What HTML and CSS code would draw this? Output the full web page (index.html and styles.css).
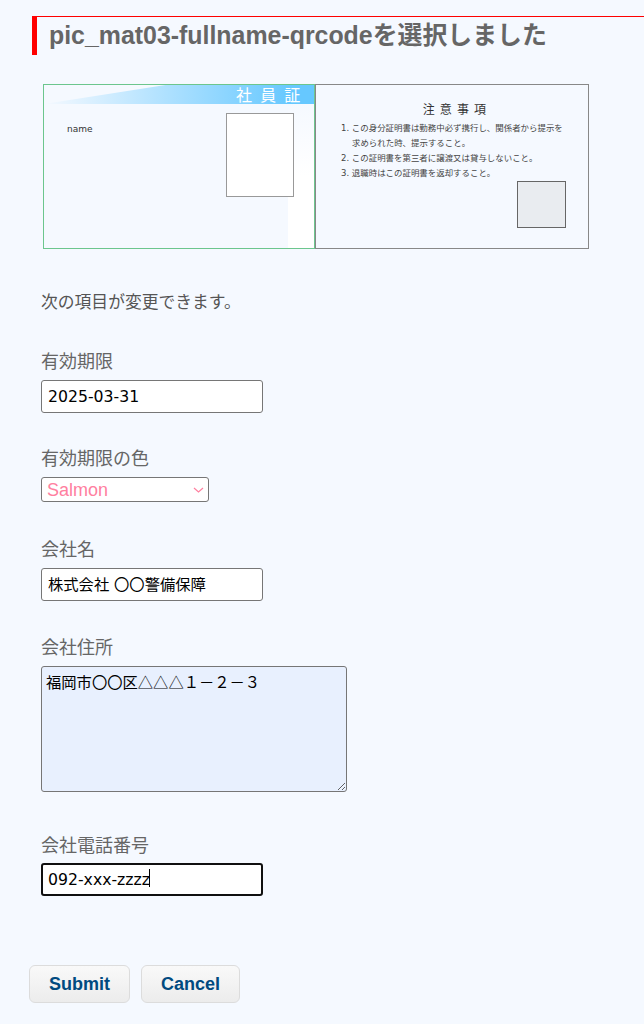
FILE: index.html
```html
<!DOCTYPE html>
<html lang="ja">
<head>
    <meta charset="UTF-8">
    <meta name="viewport" content="width=device-width, initial-scale=1.0">
    <title>pic_mat03-fullname-qrcode</title>
    <link rel="stylesheet" href="styles.css">
</head>
<body>
    <h1 class="page-title">pic_mat03-fullname-qrcodeを選択しました</h1>

    <div class="card-preview">
        <div class="card-front">
            <div class="card-band"></div>
            <div class="card-strip"></div>
            <span class="card-title">社 員 証</span>
            <span class="card-name">name</span>
            <div class="card-photo"></div>
        </div>
        <div class="card-back">
            <h2 class="notes-title">注 意 事 項</h2>
            <ol class="notes">
                <li>この身分証明書は勤務中必ず携行し、関係者から提示を<br>求められた時、提示すること。</li>
                <li>この証明書を第三者に譲渡又は貸与しないこと。</li>
                <li>退職時はこの証明書を返却すること。</li>
            </ol>
            <div class="card-stamp"></div>
        </div>
    </div>

    <p class="lead">次の項目が変更できます。</p>

    <form class="edit-form">
        <div class="field field-date">
            <label>有効期限</label>
            <input type="text" class="text-input" value="2025-03-31">
        </div>
        <div class="field field-color">
            <label>有効期限の色</label>
            <div class="select-box">
                <span>Salmon</span>
                <svg class="select-arrow" width="11" height="6" viewBox="0 0 11 6"><path d="M1 1l4.5 4L10 1" fill="none" stroke="#ff80a0" stroke-width="1.2"/></svg>
            </div>
        </div>
        <div class="field field-company">
            <label>会社名</label>
            <input type="text" class="text-input" value="株式会社 〇〇警備保障">
        </div>
        <div class="field field-address">
            <label>会社住所</label>
            <textarea class="text-area">福岡市〇〇区△△△１－２－３</textarea>
        </div>
        <div class="field field-phone">
            <label>会社電話番号</label>
            <div class="input-wrap">
                <input type="text" class="text-input focused" value="092-xxx-zzzz">
                <span class="caret"></span>
            </div>
        </div>
        <div class="buttons">
            <button type="button" class="btn btn-submit">Submit</button>
            <button type="button" class="btn btn-cancel">Cancel</button>
        </div>
    </form>
</body>
</html>
```

FILE: styles.css
```css
* {
    margin: 0;
    padding: 0;
    box-sizing: border-box;
}

body {
    font-family: 'DejaVu Sans', 'Noto Sans CJK JP', sans-serif;
    background-color: #f5f9ff;
    color: #555;
    padding: 16px 0 0 32px;
    min-height: 1024px;
}

.page-title {
    height: 39px;
    border-top: 1px solid #ff0000;
    border-left: 5px solid #ff0000;
    padding: 2px 0 0 12px;
    font-family: 'Liberation Sans', 'Noto Sans CJK JP', sans-serif;
    font-size: 24.9px;
    line-height: 32px;
    font-weight: bold;
    color: #666;
    white-space: nowrap;
}

.card-preview {
    display: flex;
    margin: 29px 0 0 11px;
    width: 546px;
    height: 165px;
}

.card-front {
    position: relative;
    width: 272px;
    height: 165px;
    border: 1px solid #6cc68e;
}

.card-band {
    position: absolute;
    top: 0;
    left: 0;
    width: 270px;
    height: 19px;
    background: linear-gradient(90deg, #f5f9ff 0%, #66c8ff 92%);
    clip-path: polygon(0 100%, 45% 0, 100% 0, 100% 100%);
}

.card-strip {
    position: absolute;
    top: 19px;
    right: 0;
    width: 26px;
    bottom: 0;
    background: linear-gradient(180deg, #f5f9ff 0%, #fff 50%);
}

.card-title {
    position: absolute;
    top: 0;
    left: 192px;
    font-family: 'Noto Sans CJK JP', sans-serif;
    font-size: 16px;
    line-height: 18px;
    letter-spacing: 2.3px;
    color: #fff;
    white-space: nowrap;
}

.card-name {
    position: absolute;
    top: 37px;
    left: 23px;
    font-size: 9px;
    line-height: 14px;
    color: #333;
}

.card-photo {
    position: absolute;
    top: 28px;
    left: 182px;
    width: 68px;
    height: 84px;
    background-color: #fff;
    border: 1px solid #999;
}

.card-back {
    position: relative;
    width: 274px;
    height: 165px;
    border: 1px solid #888;
}

.notes-title {
    margin-top: 15px;
    padding-left: 6px;
    text-align: center;
    font-family: 'Noto Sans CJK JP', sans-serif;
    font-size: 12px;
    line-height: 18px;
    letter-spacing: 1.2px;
    font-weight: normal;
    color: #333;
}

.notes {
    margin: 2px 0 0 25px;
    list-style: none;
    counter-reset: note;
    font-family: 'Noto Sans CJK JP', sans-serif;
    font-size: 8.45px;
    line-height: 15px;
    color: #444;
    white-space: nowrap;
}

.notes li {
    counter-increment: note;
    padding-left: 11px;
    text-indent: -11px;
}

.notes li::before {
    content: counter(note) ". ";
    font-family: 'DejaVu Sans', sans-serif;
    font-size: 8.5px;
    line-height: 0;
}

.card-stamp {
    position: absolute;
    top: 96px;
    left: 201px;
    width: 49px;
    height: 47px;
    background-color: #e9ecf0;
    border: 1px solid #666;
}

.lead {
    margin: 40px 0 0 9px;
    font-size: 16.8px;
    line-height: 24px;
    font-family: 'Noto Sans CJK JP', sans-serif;
    color: #555;
}

.edit-form {
    margin-left: 9px;
}

.field label {
    display: block;
    font-family: 'Noto Sans CJK JP', sans-serif;
    font-size: 18px;
    line-height: 26px;
    color: #666;
}

.field-date {
    margin-top: 34px;
}

.field-color {
    margin-top: 31px;
}

.field-color .select-box {
    margin-top: 7px;
}

.field-company {
    margin-top: 33px;
}

.field-address {
    margin-top: 32px;
}

.field-phone {
    margin-top: 39px;
}

.field-date .text-input {
    margin-top: 7px;
}

.field-phone .text-input {
    margin-top: 6px;
}

.field-company .text-input {
    margin-top: 7px;
    padding-bottom: 4px;
    font-size: 15.3px;
}

.text-input {
    display: block;
    width: 222px;
    height: 33px;
    padding: 0 6px;
    font-family: 'DejaVu Sans', 'Noto Sans CJK JP', sans-serif;
    font-size: 15.7px;
    color: #000;
    background-color: #fff;
    border: 1px solid #767676;
    border-radius: 3px;
    outline: none;
}

.text-input.focused {
    border: 2px solid #101010;
    padding: 0 5px 1px;
}

.input-wrap {
    position: relative;
}

.caret {
    position: absolute;
    top: 6px;
    left: 108px;
    width: 1px;
    height: 18px;
    background-color: #000;
}

.select-box {
    display: flex;
    align-items: center;
    justify-content: space-between;
    width: 168px;
    height: 25px;
    padding: 1px 4px 0 5px;
    font-family: 'Liberation Sans', sans-serif;
    font-size: 18px;
    color: #ff80a0;
    background-color: #fff;
    border: 1px solid #767676;
    border-radius: 3px;
}

.text-area {
    display: block;
    width: 306px;
    height: 126px;
    margin-top: 7px;
    padding: 3px 4px;
    font-family: 'Noto Sans CJK JP', sans-serif;
    font-size: 15.3px;
    line-height: 22px;
    color: #000;
    background-color: #e8f0fe;
    border: 1px solid #767676;
    border-radius: 3px;
    outline: none;
}

.buttons {
    display: flex;
    gap: 11px;
    margin: 69px 0 0 -12px;
}

.btn {
    height: 38px;
    font-family: 'Liberation Sans', sans-serif;
    font-size: 18px;
    font-weight: bold;
    color: #004a80;
    background: linear-gradient(180deg, #f9f9f9 0%, #ececec 100%);
    border: 1px solid #dcdcdc;
    border-radius: 6px;
}

.btn-submit {
    width: 101px;
}

.btn-cancel {
    width: 99px;
}
```
